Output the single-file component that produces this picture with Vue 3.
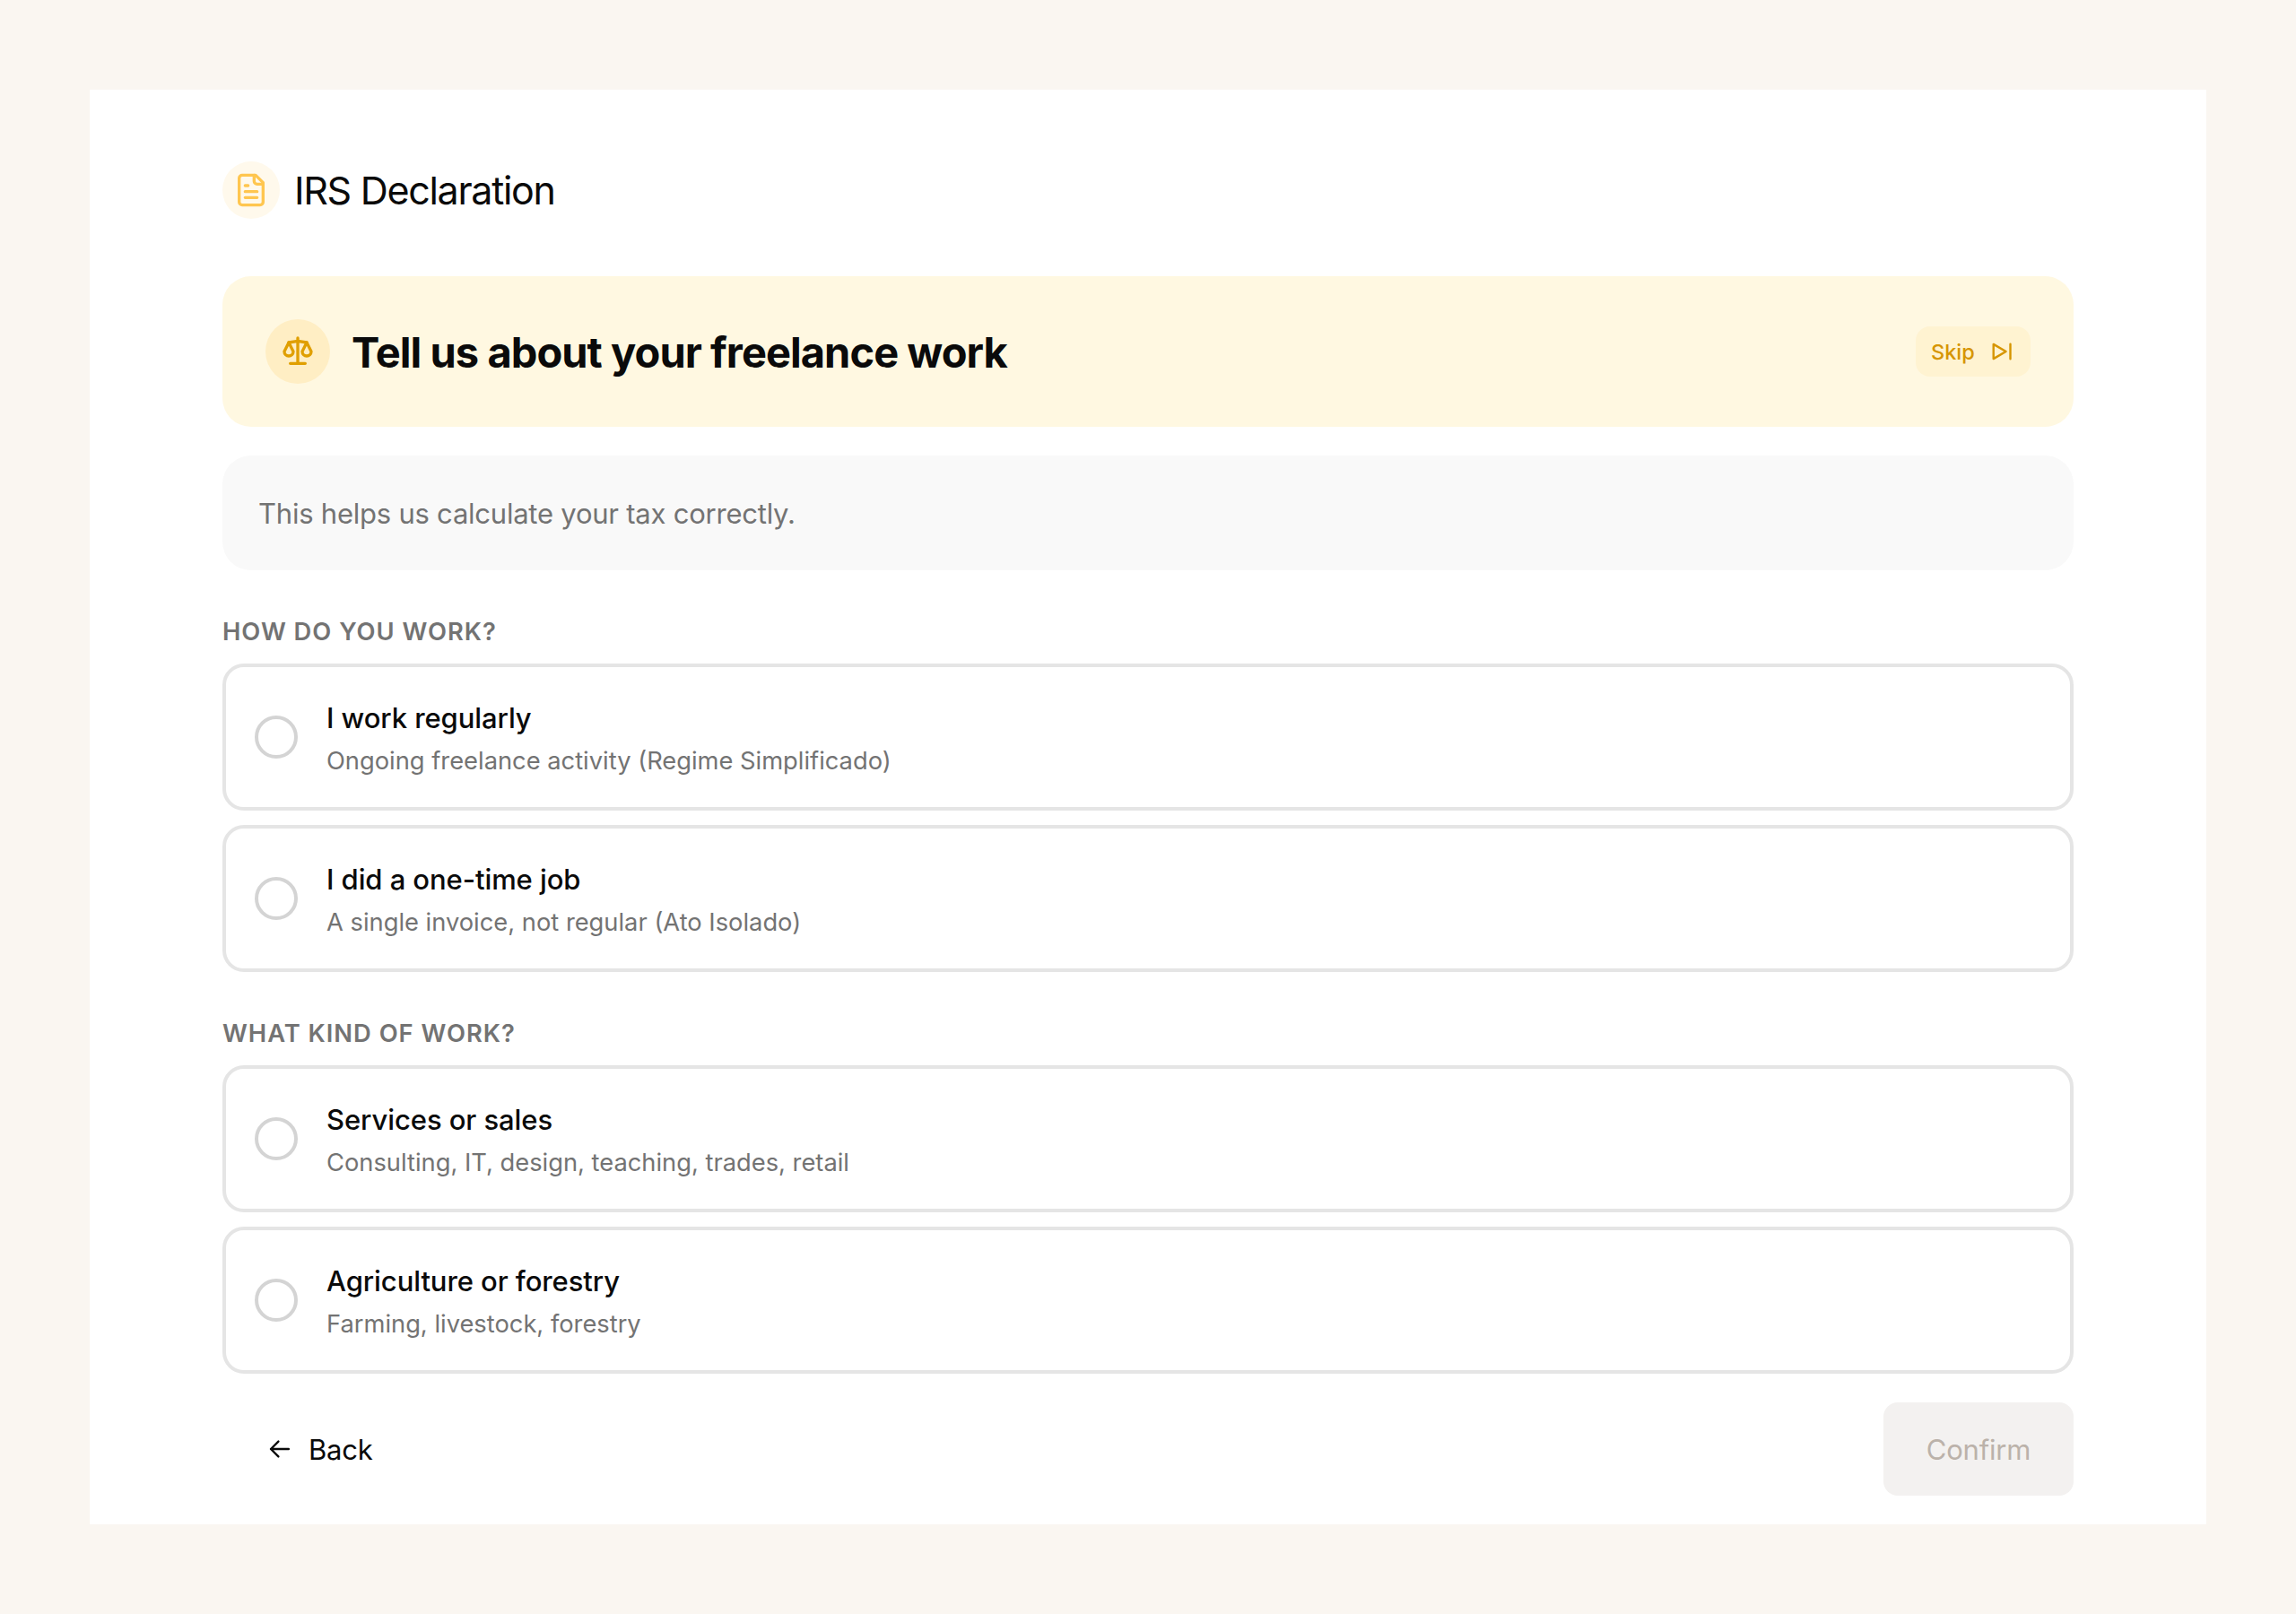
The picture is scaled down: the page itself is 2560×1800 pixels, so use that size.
<template>
  <div class="page">
    <main class="panel">
      <header class="page-header">
        <span class="header-icon">
          <svg viewBox="0 0 24 24" class="icon-doc">
            <path d="M15 2H6a2 2 0 0 0-2 2v16a2 2 0 0 0 2 2h12a2 2 0 0 0 2-2V7Z" />
            <path d="M14 2v4a2 2 0 0 0 2 2h4" />
            <path d="M10 9H8M16 13H8M16 17H8" />
          </svg>
        </span>
        <h1>IRS Declaration</h1>
      </header>

      <section class="banner">
        <span class="banner-icon">
          <svg viewBox="0 0 24 24" class="icon-scale">
            <path d="M7 20h10M6 6l6-1 6 1M12 3v17" />
            <path d="M9 12L6 6l-3 6a3 3 0 0 0 6 0" />
            <path d="M21 12l-3-6-3 6a3 3 0 0 0 6 0" />
          </svg>
        </span>
        <h2>Tell us about your freelance work</h2>
        <button type="button" class="skip">
          <span>Skip</span>
          <svg viewBox="0 0 24 24" class="icon-skip">
            <path d="M2.7 3.9L16.6 12 2.7 20.1zM21.5 3.8v16.4" />
          </svg>
        </button>
      </section>

      <p class="note">This helps us calculate your tax correctly.</p>

      <section v-for="group in groups" :key="group.key" class="group">
        <h3>{{ group.title }}</h3>
        <div class="options">
          <button
            v-for="option in group.options"
            :key="option.value"
            type="button"
            class="option"
            :class="{ selected: answers[group.key] === option.value }"
            @click="answers[group.key] = option.value"
          >
            <span class="radio"></span>
            <span class="option-text">
              <span class="option-title">{{ option.title }}</span>
              <span class="option-hint">{{ option.hint }}</span>
            </span>
          </button>
        </div>
      </section>

      <footer class="actions">
        <button type="button" class="back">
          <svg viewBox="0 0 24 24" class="icon-back">
            <path d="M19.4 12H4.5M10.8 5.7L4.5 12l6.3 6.3" />
          </svg>
          <span>Back</span>
        </button>
        <button type="button" class="confirm" :disabled="!complete">Confirm</button>
      </footer>
    </main>
  </div>
</template>

<script setup>
import { computed, reactive } from 'vue'

const groups = [
  {
    key: 'frequency',
    title: 'How do you work?',
    options: [
      { value: 'regular', title: 'I work regularly', hint: 'Ongoing freelance activity (Regime Simplificado)' },
      { value: 'isolated', title: 'I did a one-time job', hint: 'A single invoice, not regular (Ato Isolado)' }
    ]
  },
  {
    key: 'kind',
    title: 'What kind of work?',
    options: [
      { value: 'services', title: 'Services or sales', hint: 'Consulting, IT, design, teaching, trades, retail' },
      { value: 'agriculture', title: 'Agriculture or forestry', hint: 'Farming, livestock, forestry' }
    ]
  }
]

const answers = reactive({ frequency: null, kind: null })
const complete = computed(() => groups.every((group) => answers[group.key]))
</script>

<style>
body {
  background: #faf6f1;
}
</style>

<style scoped>
.page {
  box-sizing: border-box;
  min-height: 1800px;
  padding: 100px;
  background: #faf6f1;
  font-family: Inter, "Liberation Sans", sans-serif;
  color: #0a0a0a;
}

.panel {
  box-sizing: border-box;
  height: 1600px;
  padding: 80px 148px 32px;
  background: #fff;
}

h1, h2, h3, p { margin: 0; }

button {
  padding: 0;
  border: 0;
  background: none;
  color: inherit;
  font: inherit;
  text-align: left;
  cursor: pointer;
}

svg {
  display: block;
  fill: none;
  stroke: currentColor;
  stroke-width: 2;
  stroke-linecap: round;
  stroke-linejoin: round;
}

.page-header {
  display: flex;
  align-items: center;
  gap: 16px;
  height: 64px;
  margin-bottom: 64px;
}
.page-header h1 {
  font-size: 43px;
  font-weight: 400;
  line-height: 64px;
  letter-spacing: -1.3px;
}

.header-icon {
  display: flex;
  align-items: center;
  justify-content: center;
  width: 64px;
  height: 64px;
  border-radius: 50%;
  background: #fff9ec;
  color: #ffc64f;
}
.icon-doc { width: 40px; height: 40px; }

.banner {
  display: flex;
  align-items: center;
  gap: 24px;
  height: 168px;
  box-sizing: border-box;
  padding: 0 48px;
  border-radius: 32px;
  background: #fff8e1;
}
.banner h2 {
  flex: 1;
  padding-top: 2px;
  font-size: 47px;
  font-weight: 700;
  line-height: 64px;
  letter-spacing: -0.95px;
}

.banner-icon {
  display: flex;
  align-items: center;
  justify-content: center;
  width: 72px;
  height: 72px;
  border-radius: 50%;
  background: #ffeec4;
  color: #e09f00;
}
.icon-scale { width: 40px; height: 40px; }

.skip {
  display: flex;
  align-items: center;
  justify-content: space-between;
  box-sizing: border-box;
  width: 128px;
  height: 56px;
  padding: 0 20px 0 17px;
  border-radius: 16px;
  background: #fff3d1;
  color: #d69500;
  font-size: 23.5px;
  font-weight: 500;
}
.icon-skip {
  width: 24px;
  height: 24px;
  stroke-width: 2.4;
}

.note {
  margin: 32px 0 48px;
  padding: 41px 40px 39px;
  border-radius: 32px;
  background: #f9f9f9;
  color: #737373;
  font-size: 31px;
  line-height: 48px;
  letter-spacing: -0.23px;
}

.group { margin-bottom: 48px; }
.group:last-of-type { margin-bottom: 32px; }
.group h3 {
  padding-top: 1px;
  margin-bottom: 15px;
  color: #737373;
  font-size: 27.3px;
  font-weight: 600;
  line-height: 40px;
  letter-spacing: 1px;
  text-transform: uppercase;
}

.options {
  display: flex;
  flex-direction: column;
  gap: 16px;
}

.option {
  display: flex;
  align-items: center;
  gap: 32px;
  box-sizing: border-box;
  height: 164px;
  padding: 0 32px;
  border: 4px solid #e5e5e5;
  border-radius: 24px;
}
.option.selected { border-color: #e09f00; }

.radio {
  box-sizing: border-box;
  width: 48px;
  height: 48px;
  border: 4px solid #d4d4d4;
  border-radius: 50%;
}
.selected .radio { border: 14px solid #e09f00; }

.option-text {
  display: flex;
  flex-direction: column;
  gap: 4px;
  padding-top: 2px;
}
.option-title {
  font-size: 31px;
  font-weight: 500;
  line-height: 48px;
  letter-spacing: -0.08px;
}
.option-hint {
  color: #737373;
  font-size: 27.3px;
  line-height: 40px;
}

.actions {
  display: flex;
  align-items: center;
  justify-content: space-between;
  height: 104px;
}
.actions button {
  font-size: 31px;
  line-height: 48px;
  letter-spacing: -0.2px;
}

.back {
  display: flex;
  align-items: center;
  gap: 16px;
  padding-left: 48px;
}
.back span { padding-top: 2px; }
.icon-back {
  width: 32px;
  height: 32px;
  stroke-width: 1.8;
}

.confirm {
  box-sizing: border-box;
  height: 104px;
  width: 212px;
  padding-top: 2px;
  border-radius: 16px;
  background: #ffc64f;
}
.actions .confirm { text-align: center; }
.confirm:disabled {
  background: #f3f1f0;
  color: #bbb2aa;
  cursor: default;
}
</style>
